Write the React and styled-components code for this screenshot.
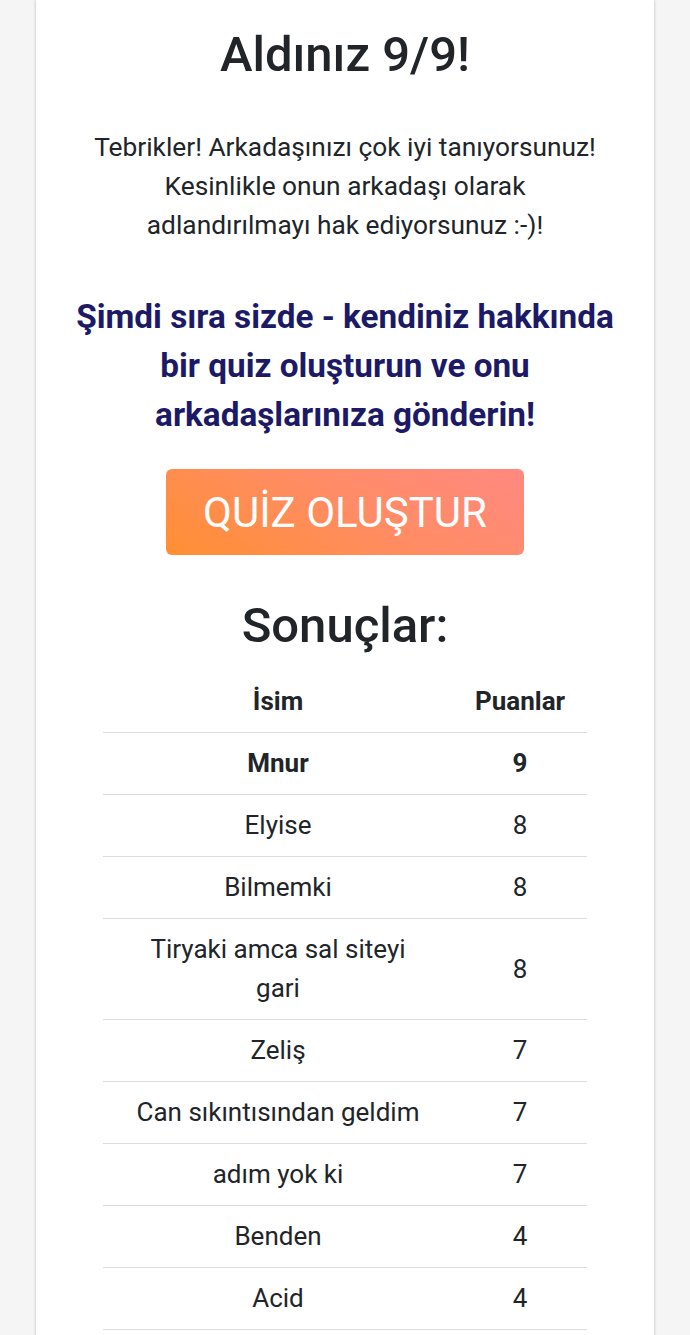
import React from "react";
import styled, { createGlobalStyle } from "styled-components";

const GlobalStyle = createGlobalStyle`
  html, body {
    margin: 0;
    padding: 0;
    background: #f5f5f5;
    font-family: Roboto, "Noto Sans", "Liberation Sans", sans-serif;
    color: #212529;
  }
`;

const Page = styled.div`
  display: flex;
  justify-content: center;
  padding: 0 36px;
`;

const Card = styled.div`
  width: 618px;
  background: #fff;
  box-shadow: 0 0 3px rgba(0, 0, 0, 0.25);
  padding: 26px 0 60px;
  display: flex;
  flex-direction: column;
  align-items: center;
  text-align: center;
`;

const Title = styled.h1`
  margin: 0;
  font-size: 49px;
  line-height: 58px;
  font-weight: 500;
`;

const Message = styled.p`
  margin: 44px 0 0;
  font-size: 26.3px;
  line-height: 39px;
  font-weight: 400;
  max-width: 520px;
`;

const CallToAction = styled.p`
  margin: 47px 0 0;
  font-size: 33.3px;
  line-height: 49px;
  font-weight: 700;
  color: #1c1a66;
  max-width: 570px;
`;

const CreateButton = styled.button`
  margin-top: 30px;
  width: 358px;
  height: 86px;
  border: none;
  border-radius: 6px;
  background: linear-gradient(30deg, #ff8f33 0%, #ff8c66 55%, #ff8880 100%);
  color: #fff;
  font-family: inherit;
  font-size: 42px;
  font-weight: 400;
  cursor: pointer;
`;

const SectionTitle = styled.h2`
  margin: 42px 0 0;
  font-size: 49px;
  line-height: 58px;
  font-weight: 500;
`;

const Table = styled.table`
  margin: 16px 0 0;
  width: 484px;
  border-collapse: collapse;
  table-layout: fixed;
`;

const Cell = styled.td`
  box-sizing: border-box;
  padding: 11px ${(p) => (p.$wide ? "25px" : "12px")};
  font-size: 26px;
  line-height: 39px;
  font-weight: ${(p) => (p.$bold ? 700 : 400)};
  text-align: center;
  vertical-align: middle;
  border-bottom: 1px solid #dcdcdc;
  width: ${(p) => (p.$wide ? "350px" : "auto")};
`;

const HeadCell = styled(Cell).attrs({ as: "th" })`
  font-weight: 700;
`;

const results = [
  { name: "Mnur", score: 9, me: true },
  { name: "Elyise", score: 8 },
  { name: "Bilmemki", score: 8 },
  { name: "Tiryaki amca sal siteyi gari", score: 8 },
  { name: "Zeliş", score: 7 },
  { name: "Can sıkıntısından geldim", score: 7 },
  { name: "adım yok ki", score: 7 },
  { name: "Benden", score: 4 },
  { name: "Acid", score: 4 },
];

export default function App() {
  return (
    <>
      <GlobalStyle />
      <Page>
        <Card>
          <Title>Aldınız 9/9!</Title>
          <Message>
            Tebrikler! Arkadaşınızı çok iyi tanıyorsunuz! Kesinlikle onun
            arkadaşı olarak adlandırılmayı hak ediyorsunuz :-)!
          </Message>
          <CallToAction>
            Şimdi sıra sizde - kendiniz hakkında bir quiz oluşturun ve onu
            arkadaşlarınıza gönderin!
          </CallToAction>
          <CreateButton>QUİZ OLUŞTUR</CreateButton>
          <SectionTitle>Sonuçlar:</SectionTitle>
          <Table>
            <thead>
              <tr>
                <HeadCell $wide>İsim</HeadCell>
                <HeadCell>Puanlar</HeadCell>
              </tr>
            </thead>
            <tbody>
              {results.map(({ name, score, me }) => (
                <tr key={name}>
                  <Cell $wide $bold={me}>
                    {name}
                  </Cell>
                  <Cell $bold={me}>{score}</Cell>
                </tr>
              ))}
            </tbody>
          </Table>
        </Card>
      </Page>
    </>
  );
}
